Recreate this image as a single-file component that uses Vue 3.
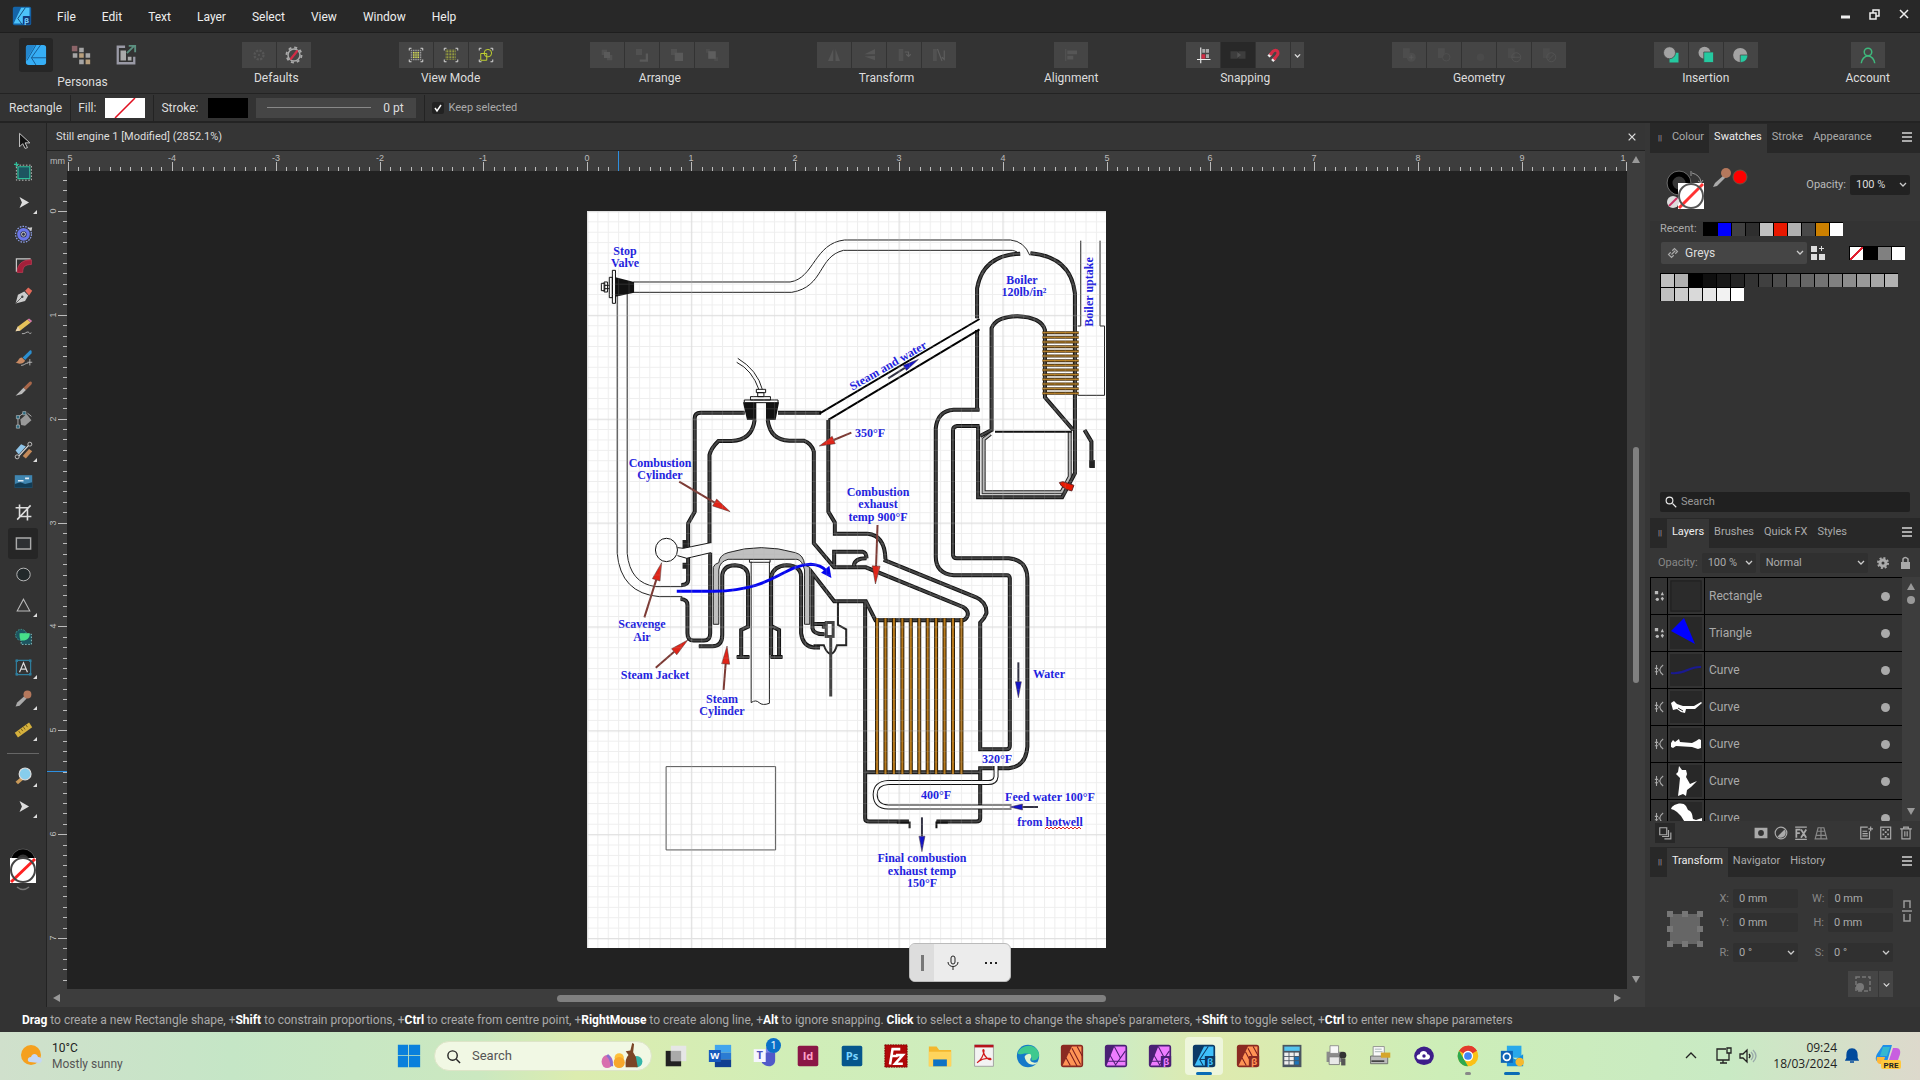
<script setup>
import { ref } from 'vue'

const menus = ['File', 'Edit', 'Text', 'Layer', 'Select', 'View', 'Window', 'Help']
const keep = ref(true)

const brackets = '<path d="M3 6V3h3M18 3h3v3M21 18v3h-3M6 21H3v-3" fill="none" stroke="#ddd" stroke-width="1.3"/>'
const dots = (n, a, s, r, c) => {
  let out = ''
  for (let i = 0; i < n; i++) for (let j = 0; j < n; j++) out += `<rect x="${a + i * s}" y="${a + j * s}" width="${r}" height="${r}" fill="${c}"/>`
  return out
}
const betaMark = '<rect x="13" y="12" width="9" height="10" rx="1" fill="#123a7a"/><text x="17.500" y="20" font-size="9" font-weight="700" text-anchor="middle" fill="#7fd4ff" font-family="Open Sans">β</text>'

const groups = [
  { label: 'Defaults', items: [
    { dim: true, svg: '<circle cx="12" cy="12" r="6" fill="none" stroke="#888" stroke-width="3" stroke-dasharray="3 1.700"/><circle cx="12" cy="12" r="1.500" fill="#888"/>' },
    { svg: '<circle cx="12" cy="12" r="8" fill="none" stroke="#aaa" stroke-width="2"/><circle cx="12" cy="12" r="10" fill="none" stroke="#aaa" stroke-width="2.500" stroke-dasharray="4 3.850"/><path d="M8 17L16 7" stroke="#d22c45" stroke-width="3" stroke-linecap="round"/>' } ] },
  { label: 'View Mode', items: [
    { svg: brackets + dots(5, 5, 3, 2, '#999') + '<path d="M8 8h8v8H8z" fill="#dfe84a" opacity=".85"/><path d="M10.500 8v8M13.500 8v8M8 10.500h8M8 13.500h8" stroke="#555"/>' },
    { svg: brackets + dots(7, 5, 2, 1, '#d3de3c') },
    { svg: brackets + '<circle cx="14.500" cy="9.500" r="5" fill="none" stroke="#c3d42f" stroke-width="1.300"/><path d="M5 10h8v9H5z" fill="none" stroke="#c3d42f" stroke-width="1.300"/>' } ] },
  { label: 'Arrange', items: [
    { dim: true, svg: '<path d="M5 5h7v7H5zM12 12h7v7h-7z" fill="#777"/><path d="M8 8h8v8H8z" fill="#999"/>' },
    { dim: true, svg: '<path d="M4 4h8v8H4z" fill="#777"/><path d="M17 10v8H9v3h11V10z" fill="#999"/>' },
    { dim: true, svg: '<path d="M4 4h8v8H4z" fill="#777"/><path d="M9 9h11v11H9z" fill="#999"/>' },
    { dim: true, svg: '<path d="M4 4h5v5H4zM15 15h5v5h-5z" fill="#666"/><path d="M7 7h10v10H7z" fill="#aaa"/>' } ] },
  { label: 'Transform', items: [
    { dim: true, svg: '<path d="M11 4v16H4zM14 4v16h6z" fill="#888"/>' },
    { dim: true, svg: '<path d="M20 4v7H6zM20 13v6L6 14z" fill="#888"/>' },
    { dim: true, svg: '<path d="M5 4h6v16H5z" fill="#777"/><path d="M13 8h5v6M15 11l3 3 3-3" stroke="#aaa" fill="none" stroke-width="1.500"/>' },
    { dim: true, svg: '<path d="M4 4h5v16H4z" fill="#777"/><path d="M10 4l6 16M19 6v12l-3-3" stroke="#aaa" fill="none" stroke-width="1.500"/>' } ] },
  { label: 'Alignment', items: [
    { dim: true, svg: '<path d="M5 4v16" stroke="#999"/><path d="M7 6h13v5H7zM7 13h8v5H7z" fill="#888"/>' } ] },
  { label: 'Snapping', items: [
    { svg: '<path d="M9 2v21M4 18h18" stroke="#eee" stroke-width="1.500"/><path d="M11 4h4v5h-4zM16 4h4v5h-4zM16 11h4v5h-4z" fill="#aaa"/><path d="M10 11h5v6h-5z" fill="#d22c45"/>' },
    { dark: true, svg: '<path d="M2 7h20v10H2z" fill="#3d3d3d"/><path d="M12 7v10" stroke="#282828"/><path d="M11 8l5 4-5 4z" fill="#555"/>' },
    { svg: '<path d="M8 12l4-5c2-2 5-2 6 0s1 4-1 6l-4 5" fill="none" stroke="#d22c45" stroke-width="4"/><path d="M6 14l3-3M11 20l3-3" stroke="#eee" stroke-width="4"/><path d="M8 12l2-2M13 18l2-2" stroke="#d22c45" stroke-width="4"/>' },
    { narrow: true, svg: '<path d="M5 9l7 7 7-7" fill="none" stroke="#ddd" stroke-width="3.500"/>' } ] },
  { label: 'Geometry', items: [
    { dim: true, svg: '<path d="M4 3h9v13H4z" fill="#666"/><circle cx="15" cy="15" r="6" fill="#666"/><path d="M12 15h6M15 12v6" stroke="#999"/>' },
    { dim: true, svg: '<path d="M4 3h9v6l-4 7H4z" fill="#666"/><circle cx="15" cy="15" r="5" fill="none" stroke="#777"/>' },
    { dim: true, svg: '<circle cx="14" cy="15" r="5" fill="#5a5a5a"/>' },
    { dim: true, svg: '<path d="M4 3h9v13H4z" fill="#5e5e5e"/><circle cx="15" cy="15" r="6" fill="none" stroke="#888"/><path d="M9 15h11" stroke="#888"/>' },
    { dim: true, svg: '<path d="M4 3h9v13H4z" fill="#5e5e5e"/><circle cx="15" cy="15" r="6" fill="none" stroke="#888"/><path d="M11 19l8-8" stroke="#888"/>' } ] },
  { label: 'Insertion', items: [
    { svg: '<path d="M10 9h12v13H10z" fill="#25c9a0"/><circle cx="10" cy="9" r="8" fill="#a3a3a3" stroke="#444"/>' },
    { svg: '<circle cx="10" cy="9" r="8" fill="#a3a3a3"/><path d="M9 8h13v14H9z" fill="#25c9a0" stroke="#444"/>' },
    { svg: '<circle cx="11" cy="12" r="9.500" fill="#a3a3a3"/><path d="M11 22V12h10c0 6-4 10-10 10z" fill="#25c9a0" stroke="#444"/>' } ] },
  { label: 'Account', items: [
    { svg: '<circle cx="12" cy="8" r="5" fill="none" stroke="#3fb87c" stroke-width="2"/><path d="M3 23c1-6 3-9 9-10 6 1 8 4 9 10" fill="none" stroke="#3fb87c" stroke-width="2"/>' } ] },
]

const tools = [
  { name: 'Move', svg: '<path d="M7 3v17l4-4 3 6 3-1-3-6h6z" fill="#111" stroke="#ccc" stroke-width="1.200"/>' },
  { name: 'Artboard', svg: '<path d="M5 6h15v15H5z" fill="#1d5560" stroke="#2fbf9b" stroke-width="1.500"/><path d="M3 4h19v19H3z" fill="none" stroke="#ddd" stroke-dasharray="2 2"/><path d="M3 0v6M0 3h6" stroke="#2fbf9b" stroke-width="1.500"/>' },
  { name: 'Node', flag: true, svg: '<path d="M7 5l3 7-3 7 12-7z" fill="#ddd"/>' },
  { name: 'Contour', svg: '<circle cx="12" cy="13" r="10" fill="none" stroke="#8fa0e8" stroke-width="1.500" stroke-dasharray="2 1.500"/><circle cx="12" cy="13" r="6" fill="#30354f" stroke="#6a76e8" stroke-width="4"/><circle cx="12" cy="13" r="2.500" fill="none" stroke="#ccc" stroke-width="1.200"/><path d="M17 5l6-1-1 5z" fill="#ccc"/>' },
  { name: 'Corner', svg: '<path d="M3 21V5h18" fill="none" stroke="#ccc" stroke-width="1.500"/><path d="M4 22C4 12 10 6 22 6v6c-8 0-11 3-11 10z" fill="#a3203a" stroke="#d0405a" stroke-width=".8"/>' },
  { name: 'Pen', svg: '<path d="M2 22l3-11 8-4 5 5-4 7z" fill="#ccc"/><path d="M2 22l8-8" stroke="#444"/><circle cx="10.500" cy="13.500" r="1.500" fill="#444"/><path d="M14 6l4-4 5 4-4 6z" fill="#e36a5a"/>' },
  { name: 'Pencil', svg: '<path d="M2 18l3-6L17 3l4 4L8 17z" fill="#e5c25a"/><path d="M17 3l2-1 4 3-2 2z" fill="#d57aa8"/><path d="M2 18l3-6 3 5z" fill="#e9d3b0"/><path d="M10 21c4 1 6-3 8-2s1 3 4 1" fill="none" stroke="#ccc"/>' },
  { name: 'Vector Brush', svg: '<path d="M11 12L20 3c2-1 3 1 2 4l-8 8z" fill="#2c8fd0"/><path d="M2 18c4 0 3-6 8-6l4 4c-2 4-8 5-12 2z" fill="#c98a63"/><path d="M9 22c4 0 5-3 9-3M20 14v8M17 18h6" fill="none" stroke="#ccc"/>' },
  { name: 'Knife', svg: '<path d="M12 11l7-7c2-2 5 0 3 3l-7 7z" fill="#a8674a"/><path d="M12 11l3 3-5 5-8 2z" fill="#bbb"/>' },
  { name: 'Fill', svg: '<path d="M8 12l8-7 6 8-8 7-5-1z" fill="#999"/><path d="M5 21V9l7-5M17 4l5 4" fill="none" stroke="#ccc"/><path d="M3 19h4v4H3zM3 7h4v4H3zM11 2h4v4h-4z" fill="#2c6a80" stroke="#ccc" stroke-width=".7"/>' },
  { name: 'Transparency', flag: true, svg: '<path d="M2 12l7-8 6 3-9 10z" fill="#8fc4e8"/><path d="M11 19l8-9 4 3-8 9z" fill="#c48a5a"/><path d="M5 20L20 4" stroke="#ddd" stroke-width="1.500"/><circle cx="4" cy="20" r="2.500" fill="#333" stroke="#ddd"/><circle cx="20" cy="4" r="2.500" fill="#333" stroke="#ddd"/>' },
  { name: 'Place Image', svg: '<path d="M1 4h22v16H1z" fill="#3f85b0"/><path d="M1 20v-5l7-2 6 2 9-2v7z" fill="#123c55"/><path d="M5 11h7M14 8h5" stroke="#dfeaf2" stroke-width="2"/>' },
  { name: 'Vector Crop', svg: '<path d="M7 2v15h15M2 6h15v16M4 21L21 3" fill="none" stroke="#ddd" stroke-width="2"/>' },
  { name: 'Rectangle', on: true, svg: '<path d="M3 5h18v14H3z" fill="#2d3033" stroke="#aaa" stroke-width="1.800"/>' },
  { name: 'Ellipse', svg: '<ellipse cx="12" cy="12" rx="8.500" ry="8" fill="#22292b" stroke="#bbb" stroke-width="1.200"/>' },
  { name: 'Triangle', flag: true, svg: '<path d="M12 4l8 15H4z" fill="none" stroke="#bbb" stroke-width="1.300"/>' },
  { name: 'Shape Builder', svg: '<circle cx="9" cy="10" r="7" fill="#1d5560" stroke="#4ab0a8" stroke-dasharray="2 1.500"/><path d="M9 9h13v13H9z" fill="#1d5560" stroke="#9dd" stroke-dasharray="2 2"/><path d="M7 8h13c0 7-5 10-11 9-2-2-2-5-2-9z" fill="#46e089"/>' },
  { name: 'Artistic Text', flag: true, svg: '<path d="M3 3h18v18H3z" fill="none" stroke="#2f7f9f" stroke-width="1.500"/><path d="M2 2h3v3H2zM19 2h3v3h-3zM2 19h3v3H2zM19 19h3v3h-3z" fill="#2f7f9f"/><path d="M7 18l5-12 5 12M9 14h6" fill="none" stroke="#ddd" stroke-width="1.500"/>' },
  { name: 'Colour Picker', flag: true, svg: '<path d="M2 22l2-5 9-8 3 3-9 9z" fill="#aaa"/><circle cx="17" cy="7" r="5" fill="#b5785c"/>' },
  { name: 'Measure', flag: true, svg: '<path d="M1 16L19 3l4 6L5 22z" fill="#d6b13d"/><path d="M6 14l2 3M9 11l2 3M12 9l2 3M15 6l2 3" stroke="#5b4a10"/>' },
  { name: 'Zoom', flag: true, gap: true, svg: '<path d="M9 14l3 3-7 6-3-3z" fill="#c99a5a"/><circle cx="14" cy="10" r="7.500" fill="#87cdec" stroke="#ddd" stroke-width="1.500"/>' },
  { name: 'View', flag: true, svg: '<path d="M7 5l3 7-3 7 12-7z" fill="#ddd"/>' },
]

const UNIT = 10.386
const hTicks = Array.from({ length: 151 }, (_, i) => ({ x: Math.round(1 + i * UNIT), n: i / 10 - 5, major: i % 10 === 0 }))
const vTicks = Array.from({ length: 78 }, (_, i) => i - 3).map(k => ({ y: Math.round(40 + k * UNIT), n: k / 10, major: k % 10 === 0 }))

const walls = [
  'M478 638H350Q333 638 333 655V935L314 970V1140Q314 1155 294 1155',
  'M292 1197Q312 1198 312 1215V1300Q312 1322 330 1322H360Q378 1322 378 1300V1058',
  'M376 1030V765Q380 745 402 723H440Q500 720 507 660',
  'M545 660Q552 720 608 722H650Q672 730 679 755V1030L738 1102H830L1112 1221Q1130 1232 1125 1248Q1120 1261 1108 1261H858L830 1204H738L675 1120V1285Q678 1303 710 1303',
  'M575 638H700', 'M721 660V935L740 968V1001H835Q885 1005 887 1078',
  'M882 1080L1150 1192Q1182 1207 1180 1240Q1175 1255 1162 1268V1648H1238Q1248 1648 1248 1638V1135Q1247 1126 1240 1126H1085Q1033 1120 1033 1070V685Q1038 632 1085 629H1160',
  'M1160 678H1095Q1083 680 1083 690V1065Q1084 1075 1094 1075H1245Q1298 1080 1299 1135V1640Q1295 1700 1245 1705H1162V1855Q1162 1865 1150 1865H1035M955 1865H840Q828 1865 828 1855V1205',
  'M828 1717H1162', 'M738 1102V1055H820Q832 1058 832 1075', 'M795 1098Q797 1075 832 1075', 'M680 1272H708V1286',
  'M345 1339H385Q413 1338 413 1305V1125Q418 1096 450 1096Q488 1098 488 1130V1280L468 1290V1368',
  'M555 1365V1130Q562 1098 600 1096Q642 1098 642 1130V1300Q647 1340 680 1343H697', 'M558 1280L578 1290V1365',
  'M455 1371H492M553 1371H588',
  'M1153 355V265Q1170 165 1278 161M1308 160Q1425 170 1437 280V820L1400 892H1156V678', 'M1153 390V629',
  'M1162 708L1195 690V385Q1208 350 1270 349Q1340 352 1350 390V592L1432 690', 'M1465 690L1485 725V802',
]
const pipes = [
  'M155 246H610C680 235 680 130 768 120H1250Q1290 124 1306 166', 'M155 277H615C710 260 690 170 765 151H1255Q1272 154 1277 166',
  'M108 288V1060Q118 1180 230 1190H297', 'M137 280V1060Q145 1150 220 1160H297',
  'M1454 122V378H1445M1510 122V378H1523V586H1445', 'M455 487Q500 510 520 570M458 475Q515 510 530 570',
  'M497 1085V1508Q510 1498 520 1508T550 1510V1085', 'M492 1078H552V1087H492Z',
]
const P = (u, v) => [580 + u / 2.904, 200 + v / 3]
const arrow = (u1, v1, u2, v2, color) => {
  const [x1, y1] = P(u1, v1), [x2, y2] = P(u2, v2)
  const len = Math.hypot(x2 - x1, y2 - y1), dx = (x2 - x1) / len, dy = (y2 - y1) / len
  const h = Math.min(18, len * 0.45), bx = x2 - dx * h, by = y2 - dy * h, w = color === 'red' ? 4 : 3
  return { x1, y1, bx, by, color, pts: `${x2},${y2} ${bx - dy * w},${by + dx * w} ${bx + dy * w},${by - dx * w}` }
}
const arrows = [
  arrow(288, 845, 436, 935, 'red'), arrow(788, 698, 695, 738, 'red'), arrow(864, 975, 858, 1152, 'red'),
  arrow(187, 1252, 237, 1088, 'red'), arrow(220, 1403, 313, 1320, 'red'), arrow(417, 1470, 427, 1338, 'red'),
  arrow(895, 535, 983, 478, 'blue'), arrow(1273, 1387, 1273, 1493, 'blue'), arrow(1330, 1821, 1248, 1821, 'blue'), arrow(993, 1852, 993, 1955, 'blue'),
]
const notes = [
  [625, 255, 'Stop'], [625, 267, 'Valve'], [660, 467, 'Combustion'], [660, 479, 'Cylinder'], [870, 437, '350°F'],
  [878, 496, 'Combustion'], [878, 508, 'exhaust'], [878, 521, 'temp 900°F'], [1022, 284, 'Boiler'], [1024, 296, '120lb/in²'],
  [642, 628, 'Scavenge'], [642, 641, 'Air'], [655, 679, 'Steam Jacket'], [722, 703, 'Steam'], [722, 715, 'Cylinder'],
  [1049, 678, 'Water'], [997, 763, '320°F'], [936, 799, '400°F'], [1050, 801, 'Feed water 100°F'], [1050, 826, 'from hotwell'],
  [922, 862, 'Final combustion'], [922, 875, 'exhaust temp'], [922, 887, '150°F'],
]
const wavy = 'M1045 829' + 'l2 -2l2 2'.repeat(9)

const recent = ['#000', '#0000ff', '#404040', '#2e2e2e', '#c0c0c0', '#e81800', '#b0b0b0', '#484848', '#cc8000', '#fff']
const greys = ['#c0c0c0', '#b0b0b0', '#000', '#0f0f0f', '#191919', '#252525', '#333', '#404040', '#4c4c4c', '#595959', '#666', '#737373', '#808080', '#8c8c8c', '#999', '#a6a6a6', '#b2b2b2', '#bfbfbf', '#ccc', '#d9d9d9', '#e6e6e6', '#f2f2f2', '#fff']

const layers = [
  { name: 'Rectangle', kind: 'shape', svg: '<path d="M1 1h30v30H1z" fill="#2b2b2b" stroke="#202020"/>' },
  { name: 'Triangle', kind: 'shape', svg: '<path d="M1 14L14 1l11 26z" fill="#00f"/>' },
  { name: 'Curve', kind: 'curve', svg: '<path d="M1 19c14 2 18-7 30-6" fill="none" stroke="#1a1a90" stroke-width="2"/>' },
  { name: 'Curve', kind: 'curve', svg: '<path d="M1 12l3-2 3 3 6 2h11l7-4 1 1-7 6H16l-1 4-4-1-4-3-4 1z" fill="#fff"/><path d="M8 17l5 3" stroke="#282828"/>' },
  { name: 'Curve', kind: 'curve', svg: '<path d="M1 15l2-3 2 2 4-3 1 3 12 1 4-2 3-2 2 1v8l-3 1-6-2-16-1-3 2-2-1z" fill="#fff"/>' },
  { name: 'Curve', kind: 'curve', svg: '<path d="M9 1l3 4 4 0 1 4-1 3 4 7 7-3-6 6-4 3-1 6-3-2-5 2 1-8 1-10-4-4 2-2z" fill="#fff"/>' },
  { name: 'Curve', kind: 'curve', svg: '<path d="M1 7c1-5 12-8 15-3l2 4c5 2 4 6 5 9l3 1 6-2v6H16l-5-8-4-4-3-2z" fill="#fff"/>' },
]
const layerTools = [
  { name: 'Mask', svg: '<path d="M1 3h22v18H1z" fill="#aaa"/><circle cx="12" cy="12" r="5" fill="#333"/>' },
  { name: 'Adjustment', svg: '<circle cx="12" cy="12" r="10" fill="none" stroke="#aaa" stroke-width="2"/><path d="M18 6a8.500 8.500 0 0 1-12 12z" fill="#aaa"/>' },
  { name: 'Effects', svg: '<path d="M2 2h20M2 23h20" stroke="#aaa" stroke-width="2"/><path d="M4 20V6h7M4 12h6M12 6l9 14M21 6l-9 14" fill="none" stroke="#aaa" stroke-width="3"/>' },
  { name: 'Live filter', svg: '<path d="M7 3h10l5 19H2zM12 3v19M4 16h16M5 9h14" fill="none" stroke="#888" stroke-width="2"/>' },
]
const layerTools2 = [
  { name: 'Add layer', svg: '<path d="M15 2H3v20h15V9" fill="none" stroke="#aaa" stroke-width="2"/><path d="M6 9h8M6 13h9M6 17h9M20 1v8M16 5h8" stroke="#aaa" stroke-width="2"/>' },
  { name: 'Pixel layer', svg: '<path d="M3 2h17v20H3z" fill="none" stroke="#aaa" stroke-width="2"/><path d="M6 5h3v3H6zM14 5h3v3h-3zM10 9h3v3h-3zM6 13h3v3H6zM14 13h3v3h-3zM10 17h3v3h-3z" fill="#aaa"/>' },
  { name: 'Delete', svg: '<path d="M2 5h20M8 5V2h8v3M5 5v17h14V5M10 9v9M14 9v9" fill="none" stroke="#aaa" stroke-width="2"/>' },
]

const aff = (bg, fg, art, beta) => `<rect x="1" y="1" width="26" height="26" rx="3" fill="${bg}"/>` + art.replaceAll('FG', fg) + (beta ? `<rect x="15" y="14" width="12" height="12" fill="${bg}"/><text x="21" y="24" font-size="11" text-anchor="middle" fill="${fg}" font-weight="700" font-family="Open Sans">β</text>` : '')
const pubArt = '<path d="M14 3h11v22H3z" fill="FG"/><path d="M11 9l9 17M14 5l10 19M7 16l5 9M20 3l6 11" stroke="#7a1d1d" stroke-width="1.200"/>'
const photoArt = '<path d="M12 3h13v22H3z" fill="FG"/><path d="M12 3l7 13M3 20h22M25 8L13 25M7 13l7 12" stroke="#4a2074" stroke-width="1.200"/>'
const desArt = '<path d="M14 3h11v22H3z" fill="FG"/><path d="M19 3L9 18l4 7M9 18h17" stroke="#0d3a66" stroke-width="1.200" fill="none"/>'
const tile = (bg, fg, t) => `<rect x="2" y="2" width="24" height="24" rx="2" fill="${bg}"/><text x="14" y="19" font-size="13" font-weight="700" text-anchor="middle" fill="${fg}" font-family="Open Sans">${t}</text>`
const apps = [
  { name: 'Task view', svg: '<path d="M2 8h18v18H2z" fill="#222"/><path d="M8 2h18v18H8z" fill="#e6e6e6"/><path d="M8 8h12v12H8z" fill="#aaa"/>' },
  { name: 'Word', svg: '<path d="M8 1h19v9H8z" fill="#41a5ee"/><path d="M8 10h19v8H8z" fill="#2b7cd3"/><path d="M8 18h19v9H8z" fill="#103f91"/><path d="M1 7h14v14H1z" fill="#185abd"/><text x="8" y="18" font-size="11" font-weight="700" text-anchor="middle" fill="#fff" font-family="Open Sans">W</text>' },
  { name: 'Teams', badge: '1', svg: '<circle cx="20" cy="7" r="4" fill="#7b83eb"/><path d="M11 10h16v9c0 4-3 7-7 7s-8-2-9-6z" fill="#5059c9"/><path d="M2 6h14v15H2z" fill="#f5f5ff"/><text x="9" y="18" font-size="13" font-weight="700" text-anchor="middle" fill="#4b53bc" font-family="Open Sans">T</text>' },
  { name: 'InDesign', svg: tile('#8a1646', '#ffa0c8', 'Id') },
  { name: 'Photoshop', svg: tile('#05568c', '#7ad4ff', 'Ps') },
  { name: 'FileZilla', svg: '<path d="M1 1h26v26H1z" fill="#b00808" stroke="#700" stroke-dasharray="2 1"/><path d="M7 24L10 6h9M9 14h7M14 13h8l-9 10h9" fill="none" stroke="#fff" stroke-width="3"/>' },
  { name: 'File Explorer', svg: '<path d="M1 3h9l3 4h14v19H1z" fill="#f4b72d"/><path d="M1 9h26v17H1z" fill="#ffd45c"/><path d="M6 18h16v8H6z" fill="#0f72c4"/>' },
  { name: 'Acrobat', svg: '<path d="M3 1h22v25H3z" fill="#f3f3f3" stroke="#999"/><path d="M3 1h22v3H3z" fill="#b5121b"/><path d="M6 22c4-3 8-9 8-14 0-2-2-2-1 1 2 6 6 10 9 9 1-2-8-2-14 2z" fill="none" stroke="#d01c1c" stroke-width="1.500"/>' },
  { name: 'Edge', svg: '<circle cx="14" cy="14" r="13" fill="#1479c9"/><path d="M2 11C5 0 24-2 27 12c0 6-5 8-9 7 1-5-2-8-6-8-5 0-8 2-10 0z" fill="#3fc98f"/><path d="M10 15c1-3 4-4 7-3 1 2 1 4 0 5-2 4 5 6 8 4-2 5-13 5-15-6z" fill="#e4f4cf"/>' },
  { name: 'Publisher', svg: aff('#8a2a22', '#ff9355', pubArt) },
  { name: 'Photo', svg: aff('#4a2074', '#ee7cff', photoArt) },
  { name: 'Photo beta', svg: aff('#4a2074', '#ee7cff', photoArt, true) },
  { name: 'Designer beta', active: true, svg: aff('#0d3a66', '#3fc0fb', desArt, true) },
  { name: 'Publisher beta', svg: aff('#8a2a22', '#ff9355', pubArt, true) },
  { name: 'Calculator', svg: '<path d="M3 1h22v26H3z" fill="#4a5560"/><path d="M5 3h18v5H5z" fill="#56c4ee"/>' + [5, 11, 17].map(x => [10, 15, 20].map(y => `<path d="M${x} ${y}h5v4h-5z" fill="${x === 17 && y > 14 ? '#1d74bb' : '#eee'}"/>`).join('')).join('') },
  { name: 'Fax', svg: '<path d="M3 9h18v12H3z" fill="#8b8b8b"/><path d="M7 2h10v9H7z" fill="#f8f8f8" stroke="#888"/><path d="M6 15h12v9H6z" fill="#e8e8e8" stroke="#777"/><circle cx="22" cy="13" r="4" fill="#333"/><path d="M20 17h5v8h-5z" fill="#555"/>' },
  { name: 'Scanner', svg: '<path d="M3 14h20v9H3z" fill="#bbb" stroke="#666"/><path d="M6 3h13v11H6z" fill="#fafafa" stroke="#888"/><path d="M8 6h8M8 9h9" stroke="#9aa"/><path d="M15 10h11v6H15z" fill="#d5a62a"/><path d="M4 20h15" stroke="#444" stroke-width="2"/>' },
  { name: 'Cloud', svg: '<path d="M6 6q8-6 16 0 7 8 0 16-8 5-16 0-7-8 0-16z" fill="#3d1d8a"/><path d="M8 18c-4-1-3-6 1-6 1-5 8-5 9 0 4 0 4 6 0 6z" fill="#fff"/><circle cx="14" cy="14" r="2" fill="#3d1d8a"/>' },
  { name: 'Chrome', dot: true, svg: '<circle cx="14" cy="14" r="12" fill="#fbc116"/><path d="M14 14L3.600 8A12 12 0 0 1 24.400 8z" fill="#e33b2e"/><path d="M14 2a12 12 0 0 1 10.400 6H14z" fill="#e33b2e"/><path d="M3.600 8L14 26A12 12 0 0 1 3.600 8z" fill="#2da94f"/><circle cx="14" cy="14" r="6" fill="#fff"/><circle cx="14" cy="14" r="4.500" fill="#4285f4"/>' },
  { name: 'Outlook', dot: true, blue: true, svg: '<path d="M8 2h17v14H8z" fill="#28a8ea"/><path d="M8 12l10 6 9-6v14H8z" fill="#1490df"/><path d="M1 8h14v14H1z" fill="#0f64b5"/><circle cx="8" cy="15" r="4" fill="none" stroke="#fff" stroke-width="2"/><circle cx="23" cy="21" r="5" fill="#f5b92f"/>' },
]
const status = [['Drag', ' to create a new Rectangle shape, +'], ['Shift', ' to constrain proportions, +'], ['Ctrl', ' to create from centre point, +'], ['RightMouse', ' to create along line, +'], ['Alt', ' to ignore snapping. '], ['Click', " to select a shape to change the shape's parameters, +"], ['Shift', ' to toggle select, +'], ['Ctrl', ' to enter new shape parameters']]
</script>

<template>
  <div class="app">
    <header class="title">
      <svg class="logo" viewBox="0 0 24 24"><rect x="1" y="1" width="22" height="22" rx="2" fill="#1464a8" /><path d="M11 2h10v19H2z" fill="#4cc3fb" /><path d="M16 2L7 15l5 7" stroke="#0d3a66" fill="none" /><g v-html="betaMark"></g></svg>
      <nav><a v-for="m in menus" :key="m" href="#">{{ m }}</a></nav>
      <div class="win">
        <button aria-label="Minimise"><svg viewBox="0 0 12 12"><path d="M1 9h9" stroke="#eee" stroke-width="3" /></svg></button>
        <button aria-label="Restore"><svg viewBox="0 0 12 12"><path d="M1 5h6v6H1zM4 5V2h6v6H7" fill="none" stroke="#eee" stroke-width="1.5" /></svg></button>
        <button aria-label="Close"><svg viewBox="0 0 12 12"><path d="M2 2l8 8M10 2l-8 8" stroke="#eee" stroke-width="1.5" /></svg></button>
      </div>
    </header>

    <div class="toolbar">
      <div class="group personas">
        <div class="btns">
          <button class="on" aria-label="Designer"><svg viewBox="0 0 24 24"><rect x="1" y="1" width="22" height="22" rx="3" fill="#36aef5" /><path d="M1 4q0-3 3-3h7L1 18z" fill="#2486cc" /><path d="M12 1L2 18M17 1L7 15l5 8M7 15h16" stroke="#17568c" fill="none" /></svg></button>
          <button aria-label="Pixel"><svg viewBox="0 0 24 24"><path d="M2 2h6v6H2z" fill="#8c6468" /><path d="M10 4h5v5h-5zM3 10h5v5H3zM17 10h5v5h-5zM10 17h5v5h-5z" fill="#a5a5a5" /><path d="M10 10h5v5h-5zM17 17h5v5h-5z" fill="#b89f7c" /></svg></button>
          <button aria-label="Export"><svg viewBox="0 0 24 24"><path d="M11 3H3v18h18v-7" fill="none" stroke="#9a9aa6" stroke-width="2.500" /><path d="M6 7h6v11H6zM14 14h4v4h-4z" fill="#aaa" /><path d="M13 10l8-8M15 2h7v7" fill="none" stroke="#5c9080" stroke-width="2" /></svg></button>
        </div>
        <span>Personas</span>
      </div>
      <div v-for="g in groups" :key="g.label" class="group">
        <div class="btns">
          <button v-for="(b, i) in g.items" :key="i" :class="{ dim: b.dim, dark: b.dark, narrow: b.narrow }" :aria-label="g.label + ' ' + (i + 1)"><svg viewBox="0 0 24 24" v-html="b.svg"></svg></button>
        </div>
        <span>{{ g.label }}</span>
      </div>
    </div>

    <div class="context">
      <span>Rectangle</span><i></i><span>Fill:</span>
      <button class="sw none" aria-label="Fill"><svg viewBox="0 0 40 20"><path d="M10 20L30 0" stroke="#e01020" stroke-width="1.500" /></svg></button><i></i>
      <span>Stroke:</span><button class="sw black" aria-label="Stroke colour"></button>
      <button class="width"><b></b>0 pt</button><i></i>
      <label><input v-model="keep" type="checkbox">Keep selected</label>
    </div>

    <main>
      <aside class="tools">
        <template v-for="t in tools" :key="t.name">
          <hr v-if="t.gap">
          <button :class="{ on: t.on, flag: t.flag }" :aria-label="t.name"><svg viewBox="0 0 24 24" v-html="t.svg"></svg></button>
        </template>
        <svg class="wells" viewBox="0 0 30 44"><circle cx="15" cy="14" r="12" fill="none" stroke="#555" /><circle cx="15" cy="14" r="9" fill="none" stroke="#000" stroke-width="5" /><path d="M2 11h26v25H2z" fill="#fff" /><path d="M3 35L27 12" stroke="#f22" stroke-width="3" /><circle cx="15" cy="23" r="12" fill="none" stroke="#444" stroke-width="2" /><path d="M9 40q6 5 12 0" fill="none" stroke="#777" stroke-width="1.500" /></svg>
      </aside>

      <section class="doc">
        <div class="tab"><span>Still engine 1 [Modified] (2852.1%)</span><button aria-label="Close document"><svg viewBox="0 0 12 12"><path d="M2 2l8 8M10 2l-8 8" stroke="#ddd" stroke-width="1.5" /></svg></button></div>
        <div class="stage">
          <div class="corner">mm</div>
          <div class="rule h">
            <svg width="1560" height="20">
              <path v-for="t in hTicks" :key="t.x" :d="`M${t.x}.5 ${t.major ? 11 : 16}V20`" stroke="#bbb" />
              <text v-for="t in hTicks.filter(t => t.major)" :key="'l' + t.n" :x="t.n === -5 ? t.x + 2 : t.n === 10 ? t.x - 3 : t.x" y="10" text-anchor="middle">{{ t.n === -5 ? 5 : t.n === 10 ? 1 : t.n }}</text>
              <path d="M551.5 0V20" stroke="#2d8fe0" />
            </svg>
          </div>
          <div class="vbar"><i class="up"></i><b></b><i class="down"></i></div>
          <div class="rule v">
            <svg width="20" height="818">
              <path v-for="t in vTicks" :key="t.y" :d="`M${t.major ? 11 : 16} ${t.y}.5H20`" stroke="#bbb" />
              <text v-for="t in vTicks.filter(t => t.major)" :key="'l' + t.n" :transform="`translate(9 ${t.y}) rotate(-90)`" text-anchor="middle">{{ t.n }}</text>
              <path d="M0 600.5H20" stroke="#2d8fe0" />
            </svg>
          </div>
          <div class="canvas">
            <svg class="page" width="520" height="738" viewBox="587 211 520 738">
              <defs>
                <pattern id="minor" x="587" y="211" width="10.386" height="10.386" patternUnits="userSpaceOnUse"><path d="M.5 0V11M0 .5H11" stroke="#aaa" opacity=".2" /></pattern>
                <pattern id="major" x="587" y="211" width="103.86" height="103.86" patternUnits="userSpaceOnUse"><path d="M.5 0V104M0 .5H104" stroke="#aaa" stroke-width="2" opacity=".2" /></pattern>
              </defs>
              <path d="M587 211h519v737H587z" fill="#fff" />
              <g class="art" transform="translate(580 200) scale(.3444 .3333)">
                <path v-for="(d, i) in pipes" :key="'p' + i" :d="d" fill="none" stroke="#222" />
                <path d="M678 1336H708Q716 1360 728 1362Q740 1360 746 1336H773V1288L749 1275V1205" fill="none" stroke="#222" stroke-width="2" />
                <path v-for="(d, i) in walls" :key="'w' + i" :d="d" fill="none" stroke="#111" stroke-width="4" />
                <path v-for="(d, i) in walls" :key="'v' + i" :d="d" fill="none" stroke="#444" stroke-width="2" />
                <path d="M695 641L1160 357M721 660L1160 388" stroke="#000" stroke-width="2" />
                <path d="M1192 702L1172 718V877H1398L1422 830V695" fill="none" stroke="#222" stroke-width="4" />
                <path d="M1192 702L1172 718V877H1398L1422 830V695" fill="none" stroke="#bbb" stroke-width="2" />
                <path d="M1205 695H1428" stroke="#111" stroke-width="2" />
                <path d="M1392 848L1402 845L1434 856L1428 873L1412 868L1398 858Z" fill="#e81800" stroke="#622" />
                <path d="M305 1020V1050M305 1088V1106" stroke="#222" stroke-width="5" />
                <path d="M387 1273V1102Q390 1092 403 1088Q405 1065 430 1058Q525 1028 625 1058Q650 1065 652 1095L667 1102V1273H652V1110Q645 1080 630 1078H430Q405 1085 403 1110V1273Z" fill="#c0c0c0" stroke="#222" />
                <path d="M283 1043L300 1045L380 1028V1058L310 1075L283 1069Z" fill="#fff" />
                <path d="M283 1043L300 1045L380 1028M283 1067L310 1075L380 1058" fill="none" stroke="#111" />
                <ellipse cx="251" cy="1050" rx="32" ry="35" fill="#fff" stroke="#111" />
                <path d="M103 232L157 246V278L103 290Z" fill="#111" /><path d="M94 211H103V310H94ZM85 232H94V293H85ZM62 250H72V272H62ZM72 256H85M72 266H85M70 246H80V276H70Z" fill="#fff" stroke="#111" />
                <path d="M473 607H512V660H485ZM540 607H578L568 660H540Z" fill="#111" /><path d="M477 600H575V608H477ZM495 590H553V600H495ZM512 568H539V578H512ZM516 578H534V590H516Z" fill="#fff" stroke="#111" />
                <path v-for="i in 14" :key="'h' + i" :d="`M1343 ${384 + i * 14}H1448`" stroke="#4d3512" stroke-width="3" />
                <path v-for="i in 14" :key="'hh' + i" :d="`M1343 ${384 + i * 14}H1448`" stroke="#c98e2c" />
                <path v-for="i in 11" :key="'t' + i" :d="`M${838 + i * 24.5} 1255V1722`" stroke="#2c1d06" stroke-width="4" />
                <path v-for="i in 11" :key="'tt' + i" :d="`M${838 + i * 24.5} 1255V1722`" stroke="#b8791a" stroke-width="2" />
                <path d="M1208 1698V1730Q1206 1748 1185 1748H895Q858 1750 857 1784Q858 1820 895 1821H1253" fill="none" stroke="#111" stroke-width="5" />
                <path d="M1208 1690V1730Q1206 1748 1185 1748H895Q858 1750 857 1784Q858 1820 895 1821H1255" fill="none" stroke="#fff" stroke-width="3" />
                <path d="M920 1868H957V1885M1068 1868H1035V1885" fill="none" stroke="#111" stroke-width="2" />
                <path d="M728 1310V1490M715 1268H735V1310H715Z" fill="none" stroke="#444" stroke-width="3" />
                <path d="M1479 780H1495V804H1479Z" fill="#222" />
                <path d="M250 1700H568V1950H250Z" fill="none" stroke="#555" />
                <path d="M281 1174H390C560 1172 590 1095 670 1093Q700 1095 714 1112" fill="none" stroke="#0404f0" stroke-width="3" /><path d="M730 1134L700 1118L724 1097Z" fill="#0404f0" />
              </g>
              <g v-for="(a, i) in arrows" :key="i"><path :d="`M${a.x1} ${a.y1}L${a.bx} ${a.by}`" :stroke="a.color === 'red' ? '#7c3a34' : '#334'" stroke-width="2" /><polygon :points="a.pts" :fill="a.color === 'red' ? '#e02418' : '#1414c8'" stroke="#433" stroke-width=".5" /></g>
              <g class="notes">
                <text v-for="(n, i) in notes" :key="i" :x="n[0]" :y="n[1]">{{ n[2] }}</text>
                <text transform="translate(890 369) rotate(-30)">Steam and water</text>
                <text transform="translate(1093 292) rotate(-90)">Boiler uptake</text>
              </g>
              <path :d="wavy" fill="none" stroke="#e02020" />
              <path d="M587 211h519v737H587z" fill="url(#minor)" /><path d="M587 211h519v737H587z" fill="url(#major)" />
            </svg>
            <div class="float"><b></b><button aria-label="Dictate"><svg viewBox="0 0 16 16"><rect x="6" y="1" width="4" height="8" rx="2" /><path d="M3 7c0 6 10 6 10 0M8 12v3" /></svg></button><button aria-label="More"><svg viewBox="0 0 16 16"><path d="M2 8h2M7 8h2M12 8h2" stroke-width="2" /></svg></button></div>
          </div>
          <div class="hbar"><i class="left"></i><b></b><i class="right"></i></div>
        </div>
      </section>

      <aside class="side">
        <div class="tabs"><em>||</em><button>Colour</button><button class="on">Swatches</button><button>Stroke</button><button>Appearance</button><u></u></div>
        <div class="swatches">
          <div class="top">
            <svg width="38" height="40" viewBox="0 0 38 40"><circle cx="13" cy="13" r="9" fill="none" stroke="#000" stroke-width="5" /><circle cx="13" cy="13" r="12" fill="none" stroke="#666" /><path d="M26 3q8 2 9 9M25 1v5M32 11l3 2 2-3" fill="none" stroke="#999" /><path d="M12 13h26v26H12z" fill="#fff" /><path d="M13 38L37 14" stroke="#f33" stroke-width="3" /><circle cx="25" cy="26" r="12" fill="none" stroke="#555" stroke-width="2" /><circle cx="7" cy="32" r="6" fill="#ddd" /><path d="M3 36l8-8" stroke="#c36" stroke-width="2" /></svg>
            <svg class="pick" width="36" height="20" viewBox="0 0 36 20"><path d="M1 19l2-4 9-8 2 2-9 9z" fill="#aaa" /><circle cx="14" cy="5" r="5" fill="#b5785c" /><circle cx="28" cy="9" r="7" fill="#f00" stroke="#654" /></svg>
            <label class="op">Opacity: <select><option>100 %</option></select></label>
          </div>
          <div class="recent"><span>Recent:</span><div class="chips"><b v-for="c in recent" :key="c" :style="{ background: c }"></b></div></div>
          <div class="pal">
            <div class="palsel"><svg viewBox="0 0 16 16"><path d="M6 10l5-5M7 5l3-3 4 4-3 3M5 7l-3 3 4 4 3-3" fill="none" stroke="#aaa" stroke-width="1.500" /></svg><select aria-label="Palette"><option>Greys</option></select></div>
            <svg class="add" viewBox="0 0 14 14"><path d="M0 0h6v6H0zM0 8h6v6H0zM8 8h6v6H8zM8 2h5v1H8zM10 0h1v5h-1z" fill="#ddd" /></svg>
            <div class="chips"><b class="nil"></b><b class="k"></b><b class="g"></b><b class="w"></b></div>
          </div>
          <div class="chips grid"><b v-for="(c, i) in greys" :key="i" :style="{ background: c }"></b></div>
          <label class="find"><svg viewBox="0 0 16 16"><circle cx="6" cy="6" r="4.500" /><path d="M10 10l5 5" /></svg><input type="text" placeholder="Search" aria-label="Search swatches"></label>
        </div>

        <div class="tabs"><em>||</em><button class="on">Layers</button><button>Brushes</button><button>Quick FX</button><button>Styles</button><u></u></div>
        <div class="blend">
          <label>Opacity: <select><option>100 %</option></select></label>
          <select class="mode" aria-label="Blend mode"><option>Normal</option></select>
          <svg viewBox="0 0 14 14"><circle cx="7" cy="7" r="3" fill="none" stroke="#aaa" stroke-width="3" /><circle cx="7" cy="7" r="5" fill="none" stroke="#aaa" stroke-width="2" stroke-dasharray="2 1.900" /></svg>
          <svg viewBox="0 0 14 14"><path d="M3 6h9v7H3z" fill="#aaa" /><path d="M5 6V3q2-3 5 0v3" fill="none" stroke="#aaa" stroke-width="1.500" /></svg>
        </div>
        <div class="layers">
          <ul>
            <li v-for="(l, i) in layers" :key="i">
              <span class="kind"><svg viewBox="0 0 12 14"><g v-if="l.kind === 'shape'" fill="#bbb"><path d="M1 1h4v4H1zM10 2l2 4H8z" /><circle cx="4" cy="11" r="2" /><path d="M8 10l2-2 2 2-2 3z" /></g><path v-else d="M3 1v12M1 5h4M1 9h4M11 1Q3 7 11 13M5 7h2" fill="none" stroke="#aaa" stroke-width="1.300" /></svg></span>
              <span class="thumb"><svg viewBox="0 0 32 32" v-html="l.svg"></svg></span>
              <span class="name">{{ l.name }}</span><b></b>
            </li>
          </ul>
          <div class="lbar"><i class="up"></i><b></b><i class="down"></i></div>
        </div>
        <div class="ltools">
          <button class="stack" aria-label="Layer panels"><svg viewBox="0 0 24 24"><path d="M3 3h12v12H3zM18 7v11H7M22 11v11H11" fill="none" stroke="#aaa" stroke-width="2" /></svg></button>
          <div>
            <button v-for="t in layerTools" :key="t.name" :aria-label="t.name"><svg viewBox="0 0 24 24" v-html="t.svg"></svg></button>
          </div>
          <div>
            <button v-for="t in layerTools2" :key="t.name" :aria-label="t.name"><svg viewBox="0 0 24 24" v-html="t.svg"></svg></button>
          </div>
        </div>

        <div class="tabs"><em>||</em><button class="on">Transform</button><button>Navigator</button><button>History</button><u></u></div>
        <div class="xform">
          <svg class="anchor" viewBox="0 0 36 36"><path d="M3 3h30v30H3z" fill="#666" /><path d="M0 0h6v6H0zM15 0h6v6h-6zM30 0h6v6h-6zM0 15h6v6H0zM30 15h6v6h-6zM0 30h6v6H0zM15 30h6v6h-6zM30 30h6v6h-6z" fill="#777" /></svg>
          <div class="fields">
            <label>X:<input type="text" value="0 mm"></label><label>W:<input type="text" value="0 mm"></label>
            <label>Y:<input type="text" value="0 mm"></label><label>H:<input type="text" value="0 mm"></label>
            <label class="rot">R:<select><option>0 °</option></select></label><label class="rot">S:<select><option>0 °</option></select></label>
            <div class="scale"><button aria-label="Scale mode"><svg viewBox="0 0 16 16"><path d="M1 1h14v14H1z" fill="none" stroke="#777" stroke-width="1.500" stroke-dasharray="4 2" /><circle cx="5" cy="11" r="4" fill="#777" /></svg></button><button aria-label="Scale options"><svg viewBox="0 0 16 16"><path d="M3 6l5 5 5-5" fill="none" stroke="#ddd" stroke-width="2" /></svg></button></div>
          </div>
          <svg class="link" viewBox="0 0 10 22"><path d="M2 8V1h6v7M2 14v7h6v-7M0 11h10" fill="none" stroke="#999" stroke-width="1.500" /></svg>
        </div>
      </aside>
    </main>

    <div class="status"><template v-for="(s, i) in status" :key="i"><b>{{ s[0] }}</b>{{ s[1] }}</template></div>

    <footer>
      <div class="weather">
        <svg viewBox="0 0 24 24"><circle cx="11" cy="11" r="10" fill="#f5a01e" /><path d="M10 18c-3 0-3-5 1-5 1-4 6-4 7 0 5 0 5 6 1 6z" fill="#c5d8f5" /></svg>
        <div>10°C<br><span>Mostly sunny</span></div>
      </div>
      <div class="apps">
        <button aria-label="Start"><svg viewBox="0 0 28 28"><path d="M1 1h12v12H1zM14 1h13v12H14zM1 14h12v13H1zM14 14h13v13H14z" fill="#0a80dc" /></svg></button>
        <label class="tsearch"><svg viewBox="0 0 16 16"><circle cx="7" cy="7" r="5" /><path d="M11 11l4 4" /></svg><input type="text" placeholder="Search" aria-label="Taskbar search">
          <svg class="eggs" viewBox="0 0 44 28"><ellipse cx="6" cy="20" rx="6" ry="7" fill="#d86fae" /><path d="M6 13q5 4 5 12" stroke="#8a6fd0" stroke-width="3" fill="none" /><circle cx="19" cy="16" r="5" fill="#ffc13a" /><circle cx="19" cy="21" r="6" fill="#f7a72b" /><ellipse cx="38" cy="20" rx="6" ry="6" fill="#35b5a8" /><path d="M26 26q-1-9 3-13l-3-4 5-1 2-8 2 1-1 9 3 5q1 6 2 11z" fill="#7a4526" /></svg></label>
        <button v-for="a in apps" :key="a.name" :class="{ active: a.active, dot: a.dot, blue: a.blue }" :aria-label="a.name"><svg viewBox="0 0 28 28" v-html="a.svg"></svg><sup v-if="a.badge">{{ a.badge }}</sup></button>
      </div>
      <div class="tray">
        <svg width="12" height="16" viewBox="0 0 12 16"><path d="M1 10l5-5 5 5" /></svg>
        <svg class="net" width="18" height="18" viewBox="0 0 18 18"><path d="M11 2H2v11h12V9M5 16h7M8 13v3M12 1h4v5h-4zM14 6v5" /></svg>
        <svg class="vol" width="18" height="18" viewBox="0 0 18 18"><path d="M1 7h3l4-4v12l-4-4H1zM10 7q2 2 0 4" /><path d="M12 5q4 4 0 8M14 3q6 6 0 12" stroke="#9aa" /></svg>
        <div class="clock">09:24<br>18/03/2024</div>
        <svg width="14" height="16" viewBox="0 0 14 16"><path d="M7 1c-4 0-5 3-5 6v3l-1 2h12l-1-2V7c0-3-1-6-5-6zM5 14h4" fill="#004a9c" stroke="#004a9c" /></svg>
        <svg class="pilot" width="26" height="26" viewBox="0 0 26 26"><path d="M8 2h9l-5 17H5c-5 0-5-4-3-8z" fill="#1f8fe8" stroke="none" /><path d="M5 13l3-9h7l-3 9z" fill="#35b8d0" stroke="none" /><path d="M18 5h3c5 0 5 5 3 9l-2 6h-9z" fill="#c85ee0" stroke="none" /><path d="M2 14h8l-2 7H5c-3 0-4-4-3-7z" fill="#ffb73a" stroke="none" /><rect x="6" y="17" width="20" height="9" rx="2" fill="#ffc83d" stroke="none" /><text x="16" y="25" font-size="8" font-weight="700" text-anchor="middle">PRE</text></svg>
      </div>
    </footer>
  </div>
</template>

<style>
body { margin: 0; background: #333; }
</style>

<style scoped>
* { box-sizing: border-box; }
.app { height: 100vh; display: flex; flex-direction: column; overflow: hidden; background: #333; color: #ddd; font: 12px/16px Roboto, "Open Sans", sans-serif; }
button, select, input { font: inherit; color: inherit; border: 0; padding: 0; margin: 0; background: none; min-width: 0; }
button { display: flex; align-items: center; justify-content: center; }
a { color: inherit; text-decoration: none; }
svg { flex: none; display: block; }
.title { display: flex; align-items: center; height: 33px; background: #282828; border-bottom: 1px solid #1e1e1e; padding: 0 10px 0 12px; }
.logo { width: 20px; height: 20px; }
nav { display: flex; gap: 26px; margin-left: 25px; flex: 1; color: #eee; padding-top: 2px; }
.win { display: flex; gap: 17px; padding-bottom: 4px; }
.win svg { width: 12px; height: 12px; }
.toolbar { display: flex; justify-content: space-between; height: 61px; padding: 9px 30px 0 20px; border-bottom: 1px solid #232323; }
.group { display: flex; flex-direction: column; align-items: center; }
.group > span { line-height: 20px; white-space: nowrap; }
.btns { display: flex; gap: 1px; }
.btns button { width: 34px; height: 26px; background: #454545; }
.btns svg { width: 18px; height: 18px; }
.btns .dim svg { opacity: .25; }
.btns .dark { background: #282828; }
.btns .narrow { width: 13px; }
.btns .narrow svg { width: 9px; height: 9px; }
.personas { width: 125px; margin: -4px 9px 0 0; }
.personas .btns { gap: 11px; margin-left: -3px; }
.personas .btns button { height: 34px; background: none; }
.personas .btns .on { background: #262626; border-radius: 3px; }
.personas .btns svg { width: 22px; height: 22px; }
.context { display: flex; align-items: center; height: 29px; padding: 0 9px; border-bottom: 2px solid #232323; }
.context i { width: 1px; height: 26px; background: #232323; margin: 0 7px 0 8px; }
.sw { width: 40px; height: 20px; margin-left: 9px; }
.sw svg { width: 40px; height: 20px; }
.none { background: #fff; }
.black { background: #000; margin-right: 8px; }
.width { width: 160px; height: 20px; background: #454545; gap: 12px; }
.width b { width: 104px; height: 1px; background: #888; }
.context label { display: flex; align-items: center; gap: 5px; color: #aaa; font-size: 11px; }
.context input { appearance: none; width: 12px; height: 12px; background: #222; border-radius: 2px; }
.context input:checked { background: #222 url("data:image/svg+xml,%3Csvg xmlns='http://www.w3.org/2000/svg' viewBox='0 0 12 12'%3E%3Cpath d='M3 6l2 3 4-6' fill='none' stroke='white' stroke-width='1.500'/%3E%3C/svg%3E"); }
main { flex: 1; display: flex; min-height: 0; }
.tools { width: 47px; border-right: 1px solid #232323; display: flex; flex-direction: column; align-items: center; padding-top: 2px; }
.tools button { position: relative; width: 30px; height: 31px; }
.tools button svg { width: 19px; height: 19px; }
.tools .on { background: #262626; border-radius: 3px; }
.flag::after { content: ""; position: absolute; right: 1px; bottom: 4px; border: 2px solid; border-color: transparent #ddd #ddd transparent; }
.tools hr { width: 32px; border: 0; border-top: 1px solid #666; margin: 8px 0 6px; }
.wells { width: 30px; height: 44px; margin-top: 25px; }
.doc { flex: 1; min-width: 0; display: flex; flex-direction: column; }
.tab { height: 28px; display: flex; align-items: center; justify-content: space-between; padding: 1px 8px 0 9px; background: #353535; border-bottom: 1px solid #222; font-size: 11px; }
.tab svg { width: 10px; height: 10px; }
.stage { flex: 1; min-height: 0; display: grid; grid-template: 20px minmax(0, 1fr) 18px / 20px minmax(0, 1fr) 18px; background: #3d3d3d; }
.corner { font: 9px/20px "Liberation Sans", sans-serif; padding-left: 3px; color: #bbb; }
.rule { display: flex; align-items: center; justify-content: center; overflow: hidden; }
.rule text { font: 9px "Liberation Sans", sans-serif; fill: #bbb; }
.canvas { position: relative; background: #222; display: flex; align-items: center; justify-content: center; overflow: hidden; }
.art * { vector-effect: non-scaling-stroke; }
.notes text { font: bold 12px "Liberation Serif", serif; fill: #2020e0; text-anchor: middle; }
.float { position: absolute; left: 54%; bottom: 7px; width: 102px; height: 39px; display: flex; background: #ececec; border-radius: 6px; color: #222; border: 1px solid #bbb; overflow: hidden; }
.float b { width: 24px; background: linear-gradient(#777, #777) center / 3px 16px no-repeat #ddd; }
.float button { flex: 1; }
.float svg { width: 16px; height: 16px; fill: none; stroke: #222; }
.vbar { grid-row: 1 / 4; grid-column: 3; display: flex; flex-direction: column; align-items: center; padding: 5px 0 24px; }
.vbar b { width: 6px; height: 236px; border-radius: 3px; background: #808080; margin: 284px 0 auto; }
.hbar { grid-row: 3; grid-column: 1 / 3; display: flex; align-items: center; padding: 0 6px; }
.hbar b { width: 35%; height: 7px; border-radius: 4px; background: #808080; margin: 0 auto 0 31.7%; }
.up, .down, .left, .right { border: 4px solid transparent; width: 0; }
.up { border-top: 0; border-bottom: 7px solid #999; }
.down { border-bottom: 0; border-top: 7px solid #999; }
.left { border-left: 0; border-right: 7px solid #999; }
.right { border-right: 0; border-left: 7px solid #999; }
.side { width: 275px; padding-left: 5px; background: #363636; display: flex; flex-direction: column; font-size: 11px; }
.tabs { flex: none; height: 30px; background: #282828; display: flex; padding: 1px 8px 0 8px; color: #aaa; }
.tabs em { font-style: normal; font-size: 8px; line-height: 27px; margin-right: 5px; }
.tabs button { padding: 0 5px 3px; }
.tabs .on { background: #363636; color: #eee; padding: 0 5px 3px; }
.tabs u { margin: 8px 0 0 auto; width: 10px; height: 10px; background: linear-gradient(#aaa 2px, transparent 2px) 0 0 / 10px 4px; }
.swatches { flex: 1; min-height: 0; display: flex; flex-direction: column; padding: 0 10px 6px; background: #333; }
.top { display: flex; padding: 17px 0 11px 16px; height: 68px; background: #363636; margin: 0 -10px; }
.pick { margin-left: 8px; margin-top: -2px; }
.op { margin: 5px 10px 0 auto; display: flex; align-items: center; gap: 4px; height: 20px; color: #bbb; }
select { appearance: none; outline: 0; border-radius: 2px; padding: 0 6px; background: url("data:image/svg+xml,%3Csvg xmlns='http://www.w3.org/2000/svg' viewBox='0 0 8 8'%3E%3Cpath d='M1 2l3 3 3-3' fill='none' stroke='%23ccc' stroke-width='1.300'/%3E%3C/svg%3E") right 3px center / 8px 8px no-repeat #303030; }
.op select { width: 60px; height: 20px; background-color: #222; color: #ddd; }
.recent { display: flex; gap: 7px; align-items: center; color: #aaa; }
.recent span { width: 36px; }
.chips { display: flex; flex-wrap: wrap; align-content: flex-start; }
.chips b { width: 14px; height: 14px; border: solid #000; border-width: 1px 0 0 1px; }
.chips .nil { background: linear-gradient(135deg, #fff 45%, #e02030 45% 55%, #fff 55%); }
.chips .k { background: #000; }
.chips .g { background: #808080; }
.chips .w { background: #fff; }
.pal { display: flex; align-items: center; margin: 5px 5px 9px 1px; }
.palsel { position: relative; }
.palsel select { width: 146px; height: 22px; background-color: #454545; padding-left: 24px; font-size: 12px; }
.palsel svg { position: absolute; left: 6px; top: 5px; width: 12px; height: 12px; }
.add { width: 14px; height: 14px; margin: 0 auto 0 4px; }
.find { margin-top: auto; height: 20px; display: flex; align-items: center; background: #202020; border-radius: 2px; padding: 0 5px; gap: 4px; }
.find svg, .tsearch > svg:first-child { width: 12px; height: 12px; fill: none; stroke: #eee; stroke-width: 1.5px; }
.find input { outline: 0; flex: 1; }
.find input::placeholder { color: #999; }
.blend { flex: none; height: 29px; display: flex; align-items: center; gap: 4px; padding: 0 8px; color: #aaa; }
.blend label { display: flex; align-items: center; gap: 4px; color: #888; }
.blend label select { color: #aaa; }
.blend select { width: 54px; height: 20px; }
.blend .mode { flex: 1; }
.blend svg { width: 14px; height: 14px; margin-left: 4px; }
.layers { flex: none; height: 244px; display: flex; overflow: hidden; }
ul { flex: 1; margin: 0; padding: 0; list-style: none; background: #333; }
li { display: flex; align-items: center; height: 37px; border: solid #000; border-width: 1px 0 0 1px; color: #aaa; font-size: 12px; }
.kind, .thumb { height: 100%; display: flex; align-items: center; justify-content: center; border-right: 1px solid #000; }
.kind { width: 17px; }
.kind svg { width: 10px; height: 12px; }
.thumb { width: 37px; }
.thumb svg { width: 32px; height: 32px; background: #282828; }
.name { flex: 1; padding-left: 4px; }
li b { width: 9px; height: 9px; border-radius: 50%; background: #aaa; margin-right: 12px; }
.lbar { width: 18px; background: #3d3d3d; display: flex; flex-direction: column; align-items: center; padding: 6px 0; }
.lbar b { width: 8px; height: 8px; border-radius: 50%; background: #999; margin: 6px 0 auto; }
.ltools { flex: none; height: 26px; display: flex; align-items: center; padding: 0 7px 2px 5px; }
.ltools div { display: flex; gap: 6px; margin-left: auto; }
.ltools .stack + div { margin-left: 79px; }
.ltools svg { width: 14px; height: 14px; }
.stack { width: 20px; height: 20px; background: #282828; }
.xform { flex: none; height: 130px; display: flex; padding: 12px 7px 0 17px; color: #888; }
.anchor { width: 36px; height: 36px; margin-top: 22px; }
.fields { display: grid; grid-template-columns: 81px 81px; gap: 5px 14px; margin: 0 9px 0 14px; align-content: start; }
.fields label { display: flex; justify-content: flex-end; align-items: center; gap: 4px; height: 19px; }
.fields input, .fields select { width: 65px; height: 19px; background-color: #303030; color: #aaa; padding: 0 6px; border-radius: 2px; }
.fields .rot { margin-top: 6px; }
.scale { grid-column: 2; display: flex; justify-content: flex-end; gap: 1px; margin-top: 4px; }
.scale button { width: 30px; height: 26px; background: #454545; }
.scale button + button { width: 14px; }
.scale svg { width: 16px; height: 16px; }
.scale button + button svg { width: 9px; height: 9px; }
.link { width: 10px; height: 22px; margin-top: 11px; }
.status { flex: none; height: 25px; line-height: 27px; padding-left: 22px; color: #aaa; white-space: pre; }
.status b { color: #fff; }
footer { flex: none; height: 48px; display: flex; align-items: center; color: #222; background: linear-gradient(90deg, #d0e0cc, #c5e6c6 12%, #cbe8c0 25%, #dcecaf 30%, #d0eeb8 42%, #cdecc4 58%, #dfeaae 63%, #cdeeb8 75%, #c9eac4 90%, #ddd9cc); }
.weather { flex: 1; display: flex; gap: 8px; padding-left: 20px; }
.weather svg { width: 24px; height: 24px; margin-top: 4px; }
.weather span { color: #555; }
.apps { display: flex; align-items: center; gap: 6px; }
.apps button { position: relative; width: 38px; height: 38px; border-radius: 4px; }
.apps button svg { width: 24px; height: 24px; }
.apps .active { background: #eef6dc; }
.apps .active::after, .apps .dot::after { content: ""; position: absolute; bottom: 0; width: 16px; height: 3px; border-radius: 2px; background: #0a6cb5; }
.apps .dot::after { width: 6px; background: #888; }
.apps .blue::after { width: 16px; background: #0a6cb5; }
.apps sup { position: absolute; right: 2px; top: 1px; width: 15px; height: 15px; border-radius: 50%; background: #0a6fc8; color: #fff; font-size: 10px; line-height: 15px; }
.tsearch { width: 218px; height: 30px; border-radius: 15px; background: #f1f8e4; border: 1px solid #dde5c8; display: flex; align-items: center; padding: 0 7px 0 11px; gap: 11px; margin-right: -1px; }
.tsearch > svg:first-child { width: 15px; height: 15px; stroke: #222; }
.tsearch input { flex: 1; outline: 0; font-size: 13px; }
.tsearch input::placeholder { color: #555; }
.eggs { width: 44px; height: 26px; }
.tray { flex: 1; display: flex; align-items: center; justify-content: flex-end; gap: 12px; padding-right: 19px; }
.tray svg { fill: none; stroke: #222; stroke-width: 1.3px; }
.tray text { stroke: none; fill: #222; }
.tray .net { margin-left: 6px; }
.tray .vol { margin-left: -6px; }
.clock { text-align: right; font-family: "Open Sans", sans-serif; margin-left: 4px; }
.clock + svg { margin-left: -4px; }
.pilot { margin-left: 4px; }
</style>
